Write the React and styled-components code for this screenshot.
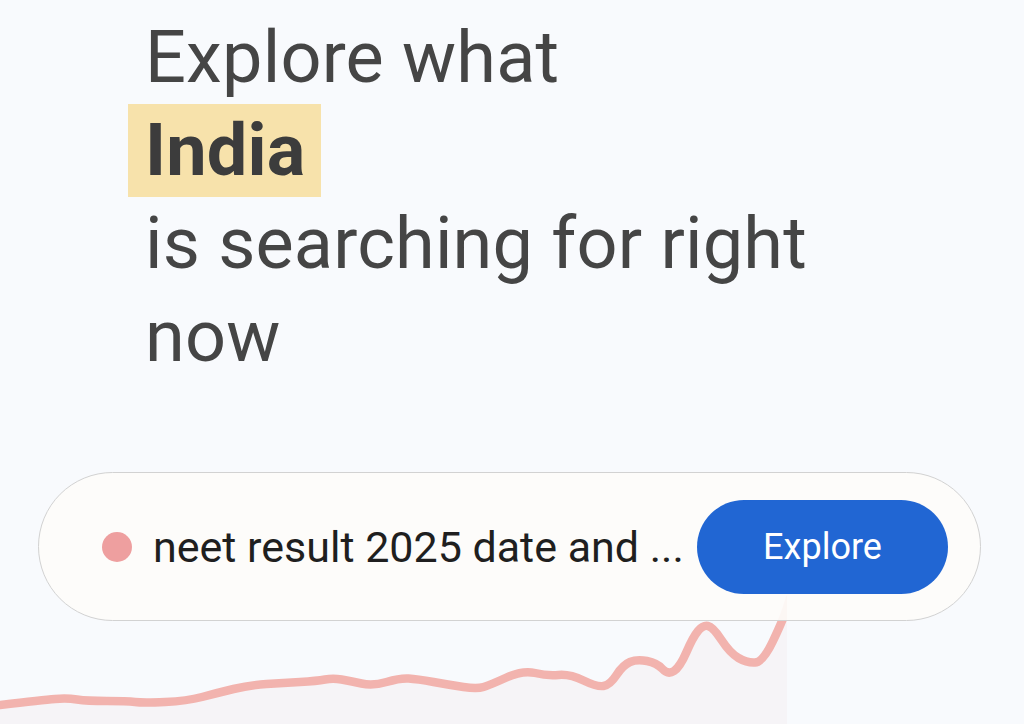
import React from 'react';
import styled, {createGlobalStyle} from 'styled-components';

const GlobalStyle = createGlobalStyle`
  html, body {
    margin: 0;
    padding: 0;
    background: #f8fafd;
  }
  body {
    font-family: Roboto, "Open Sans", sans-serif;
  }
`;

// points of the trend line, x/y in page pixels
const points = [
  [0, 705], [43, 700], [67, 698], [87, 701], [127, 701], [143, 703], [187, 701],
  [217, 693], [250, 685], [283, 683], [317, 681], [333, 678], [350, 681], [373, 686],
  [400, 678], [417, 679], [450, 685], [477, 689], [490, 685], [523, 670], [547, 676],
  [570, 674], [597, 687], [610, 685], [623, 665], [637, 659], [657, 663], [668, 675],
  [680, 667], [693, 637], [703, 625], [713, 627], [730, 653], [747, 663], [763, 662],
  [783, 620], [790, 598],
];

const CHART_TOP = 560;

// smooth the line a bit with quadratic curves through the midpoints
function smoothPath(pts) {
  const p = pts.map(([x, y]) => [x, y - CHART_TOP]);
  let d = `M${p[0][0]} ${p[0][1]}`;
  for (let i = 1; i < p.length - 1; i++) {
    const mx = (p[i][0] + p[i + 1][0]) / 2;
    const my = (p[i][1] + p[i + 1][1]) / 2;
    d += ` Q${p[i][0]} ${p[i][1]} ${mx} ${my}`;
  }
  const last = p[p.length - 1];
  d += ` L${last[0]} ${last[1]}`;
  return d;
}

function TrendChart() {
  const line = smoothPath(points);
  const area = line + ' L787 164 L0 164 Z';
  return (
    <ChartSvg viewBox="0 0 787 164" width="787" height="164">
      <path d={area} fill="#f6f4f7" />
      <path d={line} fill="none" stroke="#f2b3ae" strokeWidth="8.5" strokeLinejoin="round" strokeLinecap="round" />
    </ChartSvg>
  );
}

export default function App() {
  return (
    <Page>
      <GlobalStyle />
      <TrendChart />
      <Heading>
        <Line>Explore what</Line>
        <Line><Highlight>India</Highlight></Line>
        <Line>is searching for right</Line>
        <Line>now</Line>
      </Heading>

      <SearchPill>
        <Dot />
        <Query>neet result 2025 date and ...</Query>
        <ExploreButton type="button">Explore</ExploreButton>
      </SearchPill>
    </Page>
  );
}

const Page = styled.div`
  position: relative;
  height: 724px;
  overflow: hidden;
  padding-top: 11px;
  box-sizing: border-box;
  background: #f8fafd;
`;

const ChartSvg = styled.svg`
  position: absolute;
  left: 0;
  bottom: 0;
  display: block;
  z-index: 0;
`;

const Heading = styled.h1`
  margin: 0;
  padding-left: 145px;
  font-size: 72px;
  font-weight: 400;
  line-height: 93px;
  color: #454545;
  letter-spacing: 0.2px;
`;

const Line = styled.div`
  white-space: nowrap;
`;

const Highlight = styled.span`
  display: inline-block;
  margin-left: -17px;
  padding: 0 15px 0 17px;
  background: #f7e2ab;
  font-weight: 700;
  color: #3c3c3c;
`;

const SearchPill = styled.div`
  position: relative;
  z-index: 1;
  margin: 89px 0 0 38px;
  width: 943px;
  height: 149px;
  box-sizing: border-box;
  border: 1.5px solid #d2d2d2;
  border-radius: 75px;
  background: rgba(253, 252, 250, 0.93);
  display: flex;
  align-items: center;
  padding: 0 32px 0 63px;
`;

const Dot = styled.span`
  width: 30px;
  height: 30px;
  border-radius: 50%;
  background: #ee9f9f;
  flex-shrink: 0;
`;

const Query = styled.span`
  margin-left: 21px;
  flex: 1;
  font-size: 43px;
  color: #1f1f1f;
  white-space: nowrap;
  overflow: hidden;
`;

const ExploreButton = styled.button`
  flex-shrink: 0;
  width: 251px;
  height: 94px;
  border: none;
  border-radius: 47px;
  background: #2166d3;
  color: #fff;
  font-family: Roboto, "Open Sans", sans-serif;
  font-size: 36px;
  cursor: pointer;
`;
